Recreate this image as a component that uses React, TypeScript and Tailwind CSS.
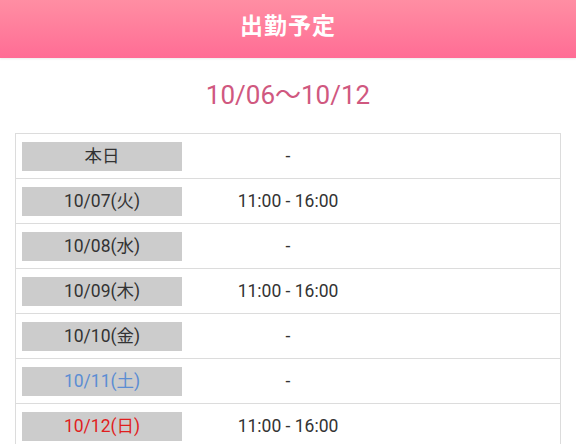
const rows: { day: string; time: string; tone?: "sat" | "sun" }[] = [
  { day: "本日", time: "-" },
  { day: "10/07(火)", time: "11:00 - 16:00" },
  { day: "10/08(水)", time: "-" },
  { day: "10/09(木)", time: "11:00 - 16:00" },
  { day: "10/10(金)", time: "-" },
  { day: "10/11(土)", time: "-", tone: "sat" },
  { day: "10/12(日)", time: "11:00 - 16:00", tone: "sun" },
];

export default function App() {
  return (
    <div
      className="w-[576px] h-[444px] overflow-hidden bg-white"
      style={{ fontFamily: "Roboto, 'Noto Sans CJK JP', sans-serif" }}
    >
      <header className="h-[58px] flex items-center justify-center bg-gradient-to-b from-[#ff8ea3] to-[#ff6c95] shadow-[0_1px_2px_rgba(0,0,0,0.08)]">
        <h1 className="text-white text-[23px] font-bold tracking-[1px] pb-[4px]">出勤予定</h1>
      </header>

      <h2 className="text-center text-[26px] text-[#d0587f] mt-[20px] leading-[34px]">
        10/06〜10/12
      </h2>

      <div className="mx-[15px] mt-[21px] border border-[#dcdcdc]">
        {rows.map((row) => (
          <div
            key={row.day}
            className="flex items-center h-[45px] px-[6px] border-b border-[#dcdcdc]"
          >
            <div
              className={`w-[160px] h-[29px] bg-[#cccccc] flex items-center justify-center text-[17.5px] ${
                row.tone === "sat"
                  ? "text-[#5b8dd3]"
                  : row.tone === "sun"
                    ? "text-[#e01e1e]"
                    : "text-[#333333]"
              }`}
            >
              {row.day}
            </div>
            <div className="w-[212px] text-center text-[17.5px] text-[#333333]">{row.time}</div>
          </div>
        ))}
      </div>
    </div>
  );
}
